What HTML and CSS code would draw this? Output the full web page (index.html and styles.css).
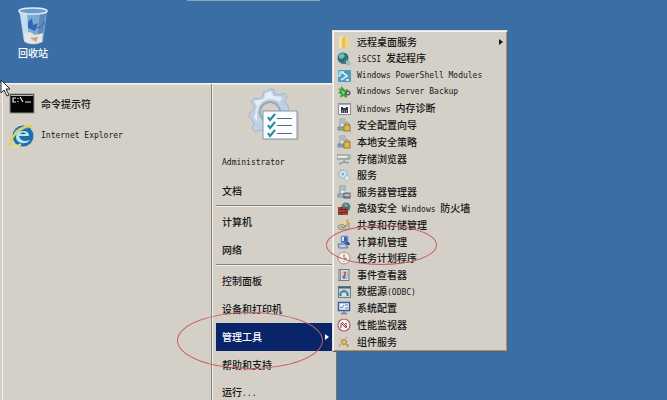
FILE: index.html
```
<!DOCTYPE html>
<html lang="zh-CN">
<head>
    <meta charset="UTF-8">
    <meta name="viewport" content="width=device-width, initial-scale=1.0">
    <title>管理工具</title>
    <link rel="stylesheet" href="styles.css">
</head>
<body>
    <main class="desktop">
        <div class="top-edge"></div>

        <button class="desktop-icon">
            <svg width="32" height="38" viewBox="0 0 32 38">
                <path d="M2 4 L30 4 L26 35 Q16 40 7 35 Z" fill="#7da9d5"/>
                <path d="M3 5 L10 6 L12 36 L7 34 Z" fill="#c3dcef"/>
                <path d="M23 6 L29 5 L25 34 L20 36 Z" fill="#5d88ba"/>
                <path d="M11 15 L15 11 L16 18 L21 16 L18 24 L11 21 Z" fill="#2f68bb"/>
                <path d="M27 15 Q25 22 15 21" fill="none" stroke="#3d669c"/>
                <path d="M7 27 L13 25 L18 28 L26 26 L25 35 Q16 39 8 35 Z" fill="#e6e4de"/>
                <path d="M13 31 L21 30 L19 35 Z" fill="#bda493"/>
                <ellipse cx="16" cy="4" rx="14" ry="3" fill="#6b9bcb" stroke="#dce9f2" stroke-width="1.5"/>
            </svg>
            <span>回收站</span>
        </button>

        <section class="start-menu">
            <div class="programs">
                <button class="program">
                    <svg width="26" height="24" viewBox="0 0 26 24">
                        <rect x="1" y="2" width="24" height="19" fill="#050505" stroke="#8c8c8c"/>
                        <path d="M2 3.5H24" stroke="#b8b8b8"/>
                        <path d="M7 6H4V10H7M9 6V7M9 9V10M11 5L14 10M16 10H22" fill="none" stroke="#ededed" stroke-width="1.2"/>
                    </svg>
                    <span>命令提示符</span>
                </button>
                <button class="program">
                    <svg width="26" height="24" viewBox="0 0 26 24">
                        <circle cx="14" cy="12" r="10.5" fill="#1c6fa9"/>
                        <path d="M5 8 Q12 0 21 4 Q12 4 7 12 Z" fill="#61b9e3"/>
                        <path d="M7 13 Q7 7 14 7 Q20 7 20 12 H10 Q11 17 17 17 L21 16 Q18 20 13 19 Q7 18 7 13 Z" fill="#b9e4f6"/>
                        <path d="M11 10 Q14 7 17 10 Z" fill="#164d82"/>
                        <path d="M3 22 Q-1 18 7 9 Q17 0 23 2" fill="none" stroke="#e6cf55" stroke-width="2.5"/>
                        <path d="M3 22 Q7 24 12 20" fill="none" stroke="#edde7b" stroke-width="2"/>
                    </svg>
                    <span class="latin">Internet Explorer</span>
                </button>
            </div>

            <nav class="places">
                <div class="user-picture">
                    <svg width="54" height="54" viewBox="0 0 54 54">
                        <path d="M19 4 L22 1 L26 2 L27 6 L32 7 L36 5 L39 9 L37 13 L40 18 L41 25 L35 40 L27 46 L22 49 L18 48 L17 44 L12 42 L7 44 L4 40 L6 35 L3 31 L1 28 L2 24 L6 22 L6 18 L3 14 L6 10 L11 11 L15 8 L15 4 Z" fill="#bfd0e2" stroke="#a3b7cb"/>
                        <path d="M17 5 L23 3 L25 8 L34 9 L32 14 Q21 7 12 16 Q7 23 10 34 L6 30 L9 18 L6 13 L16 11 Z" fill="#e6eef5"/>
                        <circle cx="22" cy="24" r="10" fill="#d4d0c8" stroke="#96a9bd" stroke-width="2"/>
                        <rect x="15" y="23" width="34" height="28" fill="#fbfcfd" stroke="#8197ac"/>
                        <path d="M16 51.5H50V25" fill="none" stroke="#a9a9a7"/>
                        <path d="M20 29 L22 32 L27 26 M20 37 L22 40 L27 34 M20 45 L22 48 L27 42" fill="none" stroke="#2388a0" stroke-width="2"/>
                        <path d="M29 30.5H44M29 37.5H44M29 45.5H44" stroke="#5d6870"/>
                    </svg>
                </div>
                <button class="place latin">Administrator</button>
                <button class="place">文档</button>
                <hr>
                <button class="place">计算机</button>
                <button class="place">网络</button>
                <hr>
                <button class="place">控制面板</button>
                <button class="place">设备和打印机</button>
                <button class="place active">管理工具 <span class="arrow"></span></button>
                <button class="place">帮助和支持</button>
                <button class="place"><span>运行<span class="latin">...</span></span></button>
            </nav>
        </section>

        <!-- 管理工具子菜单 -->
        <nav class="submenu">
            <button class="tool">
                <svg width="14" height="14" viewBox="0 0 14 14"><path d="M2 1H7V12L2 13Z" fill="#f7e29a"/><path d="M5 3L8 1V12L5 14Z" fill="#e8bf53"/><path d="M8 4H12V12H8Z" fill="#f0d47f"/></svg>
                <span>远程桌面服务</span><span class="arrow"></span>
            </button>
            <button class="tool">
                <svg width="14" height="14" viewBox="0 0 14 14"><circle cx="6" cy="6" r="5.5" fill="#256d83"/><path d="M2 3L6 1L8 4L5 7L2 6Z" fill="#75bda7"/><path d="M7 9L10 5L11 8L9 11Z" fill="#398d65"/><circle cx="11" cy="11" r="2.5" fill="#a9b8c1"/><path d="M3 10H9V12H5Z" fill="#53768f"/></svg>
                <span><span class="latin">iSCSI </span>发起程序</span>
            </button>
            <button class="tool">
                <svg width="14" height="14" viewBox="0 0 14 14"><rect x="1" y="1" width="13" height="12" rx="1" fill="#4d9cbe"/><path d="M2 2H7L3 8H1Z" fill="#a5dbe9"/><path d="M5 3L10 7L4 11M9 11H12" fill="none" stroke="#f3fbff" stroke-width="1.5"/></svg>
                <span class="latin">Windows PowerShell Modules</span>
            </button>
            <button class="tool">
                <svg width="14" height="14" viewBox="0 0 14 14"><path d="M1 3L4 4L4 1L8 5L11 4V7L13 8L10 10V13L6 11L3 13L4 9L1 8L3 6Z" fill="#34a139"/><path d="M4 5L8 7L6 10Z" fill="#8cd06b"/><circle cx="11" cy="8" r="2.5" fill="#52635d"/><circle cx="11" cy="8" r="1" fill="#e1e6e3"/></svg>
                <span class="latin">Windows Server Backup</span>
            </button>
            <button class="tool">
                <svg width="14" height="14" viewBox="0 0 14 14"><rect x="1.5" y="1.5" width="12" height="11" fill="#f6f6f8" stroke="#8b8e9b"/><path d="M1 2.5H14" stroke="#9ca7bd"/><path d="M4 5H6V6H9V5H11V11H4Z" fill="#343841"/><path d="M5.5 8V11M7.5 8V11M9.5 8V11" stroke="#858b91"/></svg>
                <span><span class="latin">Windows </span>内存诊断</span>
            </button>
            <button class="tool">
                <svg width="14" height="14" viewBox="0 0 14 14"><path d="M3 1H8V10H3Z" fill="#e6eaed" stroke="#8a959d"/><path d="M4 3H7M4 5H7M1 9H7V12H1Z" fill="#84b184" stroke="#718c91"/><path d="M8 8V6Q10 3 12 6V8" fill="none" stroke="#8a7a4d"/><rect x="7" y="7" width="6" height="6" fill="#e3b449" stroke="#9c7a30"/></svg>
                <span>安全配置向导</span>
            </button>
            <button class="tool">
                <svg width="14" height="14" viewBox="0 0 14 14"><path d="M3 1H8V10H3Z" fill="#e6eaed" stroke="#8a959d"/><path d="M4 3H7M4 5H7M1 9H7V12H1Z" fill="#88a3c2" stroke="#718c91"/><path d="M8 8V6Q10 3 12 6V8" fill="none" stroke="#8a7a4d"/><rect x="7" y="7" width="6" height="6" fill="#e3b449" stroke="#9c7a30"/></svg>
                <span>本地安全策略</span>
            </button>
            <button class="tool">
                <svg width="14" height="14" viewBox="0 0 14 14"><path d="M0 3H13V7H0Z" fill="#e9e9e6" stroke="#81898d"/><path d="M1 6.5H12" stroke="#9da5a8"/><path d="M7 8V11M2 12L7 10L12 11" fill="none" stroke="#7fa3a0" stroke-width="1.5"/><path d="M10 5H12" stroke="#54a05a"/></svg>
                <span>存储浏览器</span>
            </button>
            <button class="tool">
                <svg width="14" height="14" viewBox="0 0 14 14"><circle cx="6" cy="6" r="4" fill="#d9edf7" stroke="#91b9cf" stroke-width="2" stroke-dasharray="2 1"/><circle cx="6" cy="6" r="1.5" fill="#83aabd"/><circle cx="10" cy="10" r="2.5" fill="#d8e8ef" stroke="#9ab7c6" stroke-dasharray="2 1"/></svg>
                <span>服务</span>
            </button>
            <button class="tool">
                <svg width="14" height="14" viewBox="0 0 14 14"><path d="M3 1H8V10H3Z" fill="#e6edf0" stroke="#7b8b92"/><path d="M4 3H7M4 5H7" stroke="#689aa1"/><path d="M1 9H7V12H1Z" fill="#a5bec7" stroke="#718a92"/><rect x="7" y="8" width="6" height="5" fill="#8b9296" stroke="#52595e"/><path d="M8 8V6H12V8M7 10H13" fill="none" stroke="#d6dcde"/></svg>
                <span>服务器管理器</span>
            </button>
            <button class="tool">
                <svg width="14" height="14" viewBox="0 0 14 14"><circle cx="9" cy="5" r="4.5" fill="#3c8790"/><path d="M7 2L11 3L9 6Z" fill="#84b78d"/><rect x="1" y="5" width="10" height="8" fill="#a74135"/><path d="M1 7.5H11M1 10.5H11M4.5 5V7M8.5 8V10M4.5 11V13" stroke="#682c29"/></svg>
                <span>高级安全<span class="latin"> Windows </span>防火墙</span>
            </button>
            <button class="tool">
                <svg width="14" height="14" viewBox="0 0 14 14"><path d="M1 3H5L6 5H11V11H2Z" fill="#eed58b"/><path d="M1 8L5 6L8 8L12 5V11L7 12L2 11Z" fill="#c5c4bb" stroke="#8b8c83"/><path d="M9 2L12 1V5L9 6Z" fill="#d5b45d"/><path d="M4 8L6 10L9 8" fill="none" stroke="#86734a"/></svg>
                <span>共享和存储管理</span>
            </button>
            <button class="tool">
                <svg width="14" height="14" viewBox="0 0 14 14"><path d="M4 1H11V8H4Z" fill="#3d63c0" stroke="#9caed2"/><path d="M5 2H7V6H5Z" fill="#d8e6f4"/><path d="M7 8L12 7L13 10H8Z" fill="#30489c"/><path d="M1 9H9L11 13H2Z" fill="#a6bad3" stroke="#647e9f"/><path d="M3 11H8" stroke="#e8edf2"/></svg>
                <span>计算机管理</span>
            </button>
            <button class="tool">
                <svg width="14" height="14" viewBox="0 0 14 14"><circle cx="7" cy="7" r="6" fill="#f3eee9" stroke="#a79191"/><path d="M7 3V7L10 8M7 10V11M3 7H4" fill="none" stroke="#9a6c61"/></svg>
                <span>任务计划程序</span>
            </button>
            <button class="tool">
                <svg width="14" height="14" viewBox="0 0 14 14"><rect x="2" y="1.5" width="10" height="11" fill="#d9d9df" stroke="#777781"/><path d="M3.5 2V12" stroke="#8b8e98"/><path d="M6 4H10V10H6Z" fill="#efeff1" stroke="#a3a3aa"/><path d="M8 4V8" stroke="#b13e4b" stroke-width="1.5"/><circle cx="7" cy="9" r="1.5" fill="#516ea6"/></svg>
                <span>事件查看器</span>
            </button>
            <button class="tool">
                <svg width="14" height="14" viewBox="0 0 14 14"><rect x="1.5" y="1.5" width="12" height="11" fill="#c4d9df" stroke="#68848c"/><path d="M1 2.5H14" stroke="#42657c" stroke-width="2"/><path d="M3 11V8Q7 3 11 8V11" fill="#80a3a9" stroke="#3f656c"/><path d="M5 8H9V11H5Z" fill="#d9e3df"/></svg>
                <span>数据源<span class="latin">(ODBC)</span></span>
            </button>
            <button class="tool">
                <svg width="14" height="14" viewBox="0 0 14 14"><rect x="1.5" y="1.5" width="11" height="8" fill="#f1f5fb" stroke="#395e9d" stroke-width="1.5"/><path d="M3 6L5 7L7 4M8 4H11M8 7H11" fill="none" stroke="#4e79ba"/><path d="M7 10V12M4 12.5H10" stroke="#718299" stroke-width="1.5"/></svg>
                <span>系统配置</span>
            </button>
            <button class="tool">
                <svg width="14" height="14" viewBox="0 0 14 14"><circle cx="7" cy="7" r="6" fill="#faf4f3" stroke="#a46566" stroke-width="1.2"/><path d="M4 10V5L9 10V5M5 4L10 9" fill="none" stroke="#8b3f45"/></svg>
                <span>性能监视器</span>
            </button>
            <button class="tool">
                <svg width="14" height="14" viewBox="0 0 14 14"><circle cx="7" cy="7" r="2.5" fill="#e3bd5a" stroke="#a08138"/><circle cx="3" cy="4" r="1.5" fill="#dbc184"/><circle cx="3" cy="10" r="1.5" fill="#b7b29e"/><path d="M9 9H12V12H9Z" fill="#c5a45d"/><path d="M8 3L11 2" stroke="#a5ad9b"/></svg>
                <span>组件服务</span>
            </button>
        </nav>

        <!-- 红圈标注 -->
        <div class="mark mark-place"></div>
        <div class="mark mark-tool"></div>

        <svg class="cursor" width="12" height="19" viewBox="0 0 12 19">
            <path d="M1 1V14L4 11L7 17L9 16L6 10H10Z" fill="#fff" stroke="#222"/>
        </svg>
    </main>
</body>
</html>
```

FILE: styles.css
```
* {
    box-sizing: border-box;
}

body {
    margin: 0;
    font-family: "Noto Sans CJK SC", sans-serif;
    font-size: 10px;
    font-weight: 500;
    line-height: 14px;
    color: #161616;
}

button {
    margin: 0;
    padding: 0;
    border: none;
    background: none;
    font: inherit;
    color: inherit;
    text-align: left;
    white-space: nowrap;
}

svg {
    display: block;
    flex-shrink: 0;
}

.latin {
    font-family: "DejaVu Sans Mono", monospace;
    font-size: 8px;
    white-space: pre;
}

.desktop {
    position: relative;
    height: 100vh;
    overflow: hidden;
    background: #3a6ea5;
}

.top-edge {
    width: 20%;
    height: 1px;
    margin-left: 28%;
    background: #8ba5bf;
}

.desktop-icon {
    position: absolute;
    top: 7px;
    left: 17px;
    display: flex;
    flex-direction: column;
    align-items: center;
    gap: 1px;
    color: white;
}

.start-menu {
    position: absolute;
    top: 83px;
    bottom: 0;
    left: 0;
    display: flex;
    width: 337px;
    padding: 0 3px 0 2px;
    background: #d4d0c8;
    border-top: 1px solid #f4f3ef;
    border-right: 1px solid #77756f;
    box-shadow: inset 0 1px #e9e7e1;
}

.programs {
    flex: 1;
    padding: 4px 6px;
    border-left: 1px solid #f1efea;
    border-right: 1px solid #85827c;
}

.program {
    display: flex;
    align-items: center;
    gap: 6px;
    width: 100%;
    height: 32px;
}

.places {
    width: 121px;
    padding-left: 3px;
    border-left: 1px solid #f1efea;
}

.user-picture {
    display: flex;
    justify-content: center;
    height: 65px;
    padding-top: 4px;
}

.place {
    display: flex;
    align-items: center;
    justify-content: space-between;
    width: 100%;
    height: 28px;
    padding: 0 4px 0 6px;
}

.place.active {
    background: #0a246a;
    color: white;
}

.places hr {
    height: 2px;
    margin: 0 0 1px;
    border: none;
    border-top: 1px solid #85827c;
    border-bottom: 1px solid #f1efea;
}

.arrow {
    border: 3px solid transparent;
    border-left: 4px solid currentColor;
    border-right: none;
}

.submenu {
    position: absolute;
    top: 30px;
    bottom: 48px;
    left: 332px;
    display: flex;
    flex-direction: column;
    width: 176px;
    padding: 3px 4px 1px;
    background: #d4d0c8;
    border: 1px solid;
    border-color: #e4e1da #65635e #65635e #e4e1da;
    box-shadow: inset 1px 1px #f8f7f3, inset -1px -1px #96938c;
}

.tool {
    display: flex;
    flex: 1;
    align-items: center;
    gap: 6px;
    min-height: 0;
}

.tool .arrow {
    margin-left: auto;
}

.mark {
    position: absolute;
    border: 1px solid #c65f63;
    border-radius: 50%;
    pointer-events: none;
}

.mark-place {
    top: 312px;
    left: 177px;
    width: 146px;
    height: 57px;
}

.mark-tool {
    top: 225px;
    left: 326px;
    width: 111px;
    height: 40px;
}

.cursor {
    position: absolute;
    top: 79px;
    left: 0;
}
```
